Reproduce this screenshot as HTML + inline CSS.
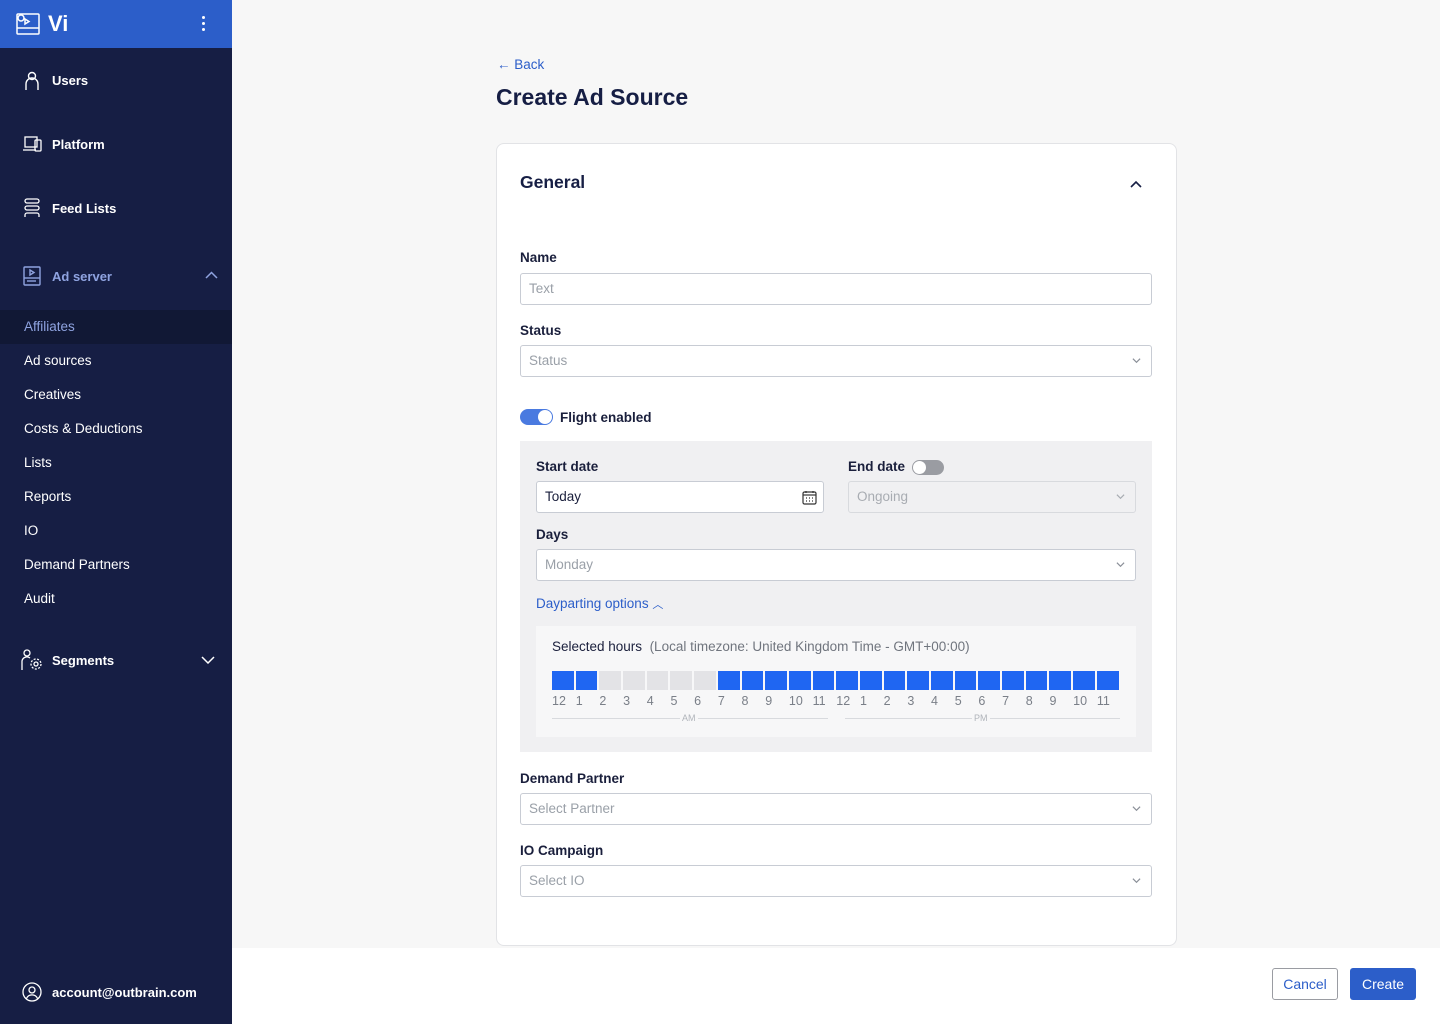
<!DOCTYPE html>
<html><head><meta charset="utf-8"><style>
*{box-sizing:border-box;margin:0;padding:0}
body{width:1440px;height:1024px;position:relative;background:#f7f7f7;font-family:"Liberation Sans",sans-serif;overflow:hidden;color:#1a1f3c}
.a{position:absolute}
#sb{left:0;top:0;width:232px;height:1024px;background:#161e44}
#hd{left:0;top:0;width:232px;height:48px;background:#2c5ec9}
.nv{color:#fff;font-size:13px;font-weight:bold;left:52px}
.sub{color:#fff;font-size:13.5px;left:24px}
.lbl{font-size:13.5px;color:#1a1f3c;font-weight:bold}
.inp{background:#fff;border:1px solid #c8ccd4;border-radius:3px;height:32px;font-size:13.5px;color:#9aa0a8;padding:7px 8px}
.chev{position:absolute;right:10px;top:10px;width:9px;height:9px}
.hrs{display:flex}
.hrs div{width:21.7px;margin-right:2px;height:19px;background:#1f66f2}
.hrs div.g{background:#e3e3e6}
.lb{display:flex;font-size:12.5px;color:#7a7f88}
.lb span{width:23.7px}
</style></head><body>
<div id="sb" class="a"></div>
<div id="hd" class="a"></div>
<svg class="a" style="left:16px;top:13px" width="24" height="22" viewBox="0 0 24 22" fill="none" stroke="#fff" stroke-width="1.5"><rect x="1" y="1" width="22" height="20" rx="1"/><line x1="1" y1="15" x2="23" y2="15"/><path d="M9 6 L13 8.5 L9 11Z"/><circle cx="5" cy="5" r="3"/></svg>
<div class="a" style="left:48px;top:11px;color:#fff;font-size:22px;font-weight:bold">Vi</div>
<div class="a" style="left:202px;top:16px;width:3px;height:3px;background:#fff;border-radius:50%;box-shadow:0 6px 0 #fff,0 12px 0 #fff"></div>
<svg class="a" style="left:24px;top:71px" width="16" height="20" viewBox="0 0 16 20" fill="none" stroke="#fff" stroke-width="1.4"><circle cx="8" cy="5" r="3.5"/><path d="M2 19v-6a6 6 0 0 1 12 0v6"/></svg>
<div class="a nv" style="top:73px">Users</div>
<svg class="a" style="left:22px;top:136px" width="20" height="16" viewBox="0 0 20 16" fill="none" stroke="#fff" stroke-width="1.3"><rect x="3" y="1" width="12" height="10"/><path d="M1 14h13"/><rect x="13" y="4" width="6" height="11" rx="1"/></svg>
<div class="a nv" style="top:137px">Platform</div>
<svg class="a" style="left:24px;top:198px" width="16" height="20" viewBox="0 0 16 20" fill="none" stroke="#fff" stroke-width="1.3"><rect x="1" y="1" width="14" height="4" rx="2"/><rect x="1" y="8" width="14" height="4" rx="2"/><path d="M1 19v-2a2 2 0 0 1 2-2h10a2 2 0 0 1 2 2v2"/></svg>
<div class="a nv" style="top:201px">Feed Lists</div>
<svg class="a" style="left:23px;top:266px" width="18" height="20" viewBox="0 0 18 20" fill="none" stroke="#8fa3e0" stroke-width="1.4"><rect x="1" y="1" width="16" height="18" rx="1"/><line x1="1" y1="12" x2="17" y2="12"/><path d="M7 4l4 2.5-4 2.5z"/><line x1="4" y1="15" x2="13" y2="15"/></svg>
<div class="a nv" style="top:269px;color:#8fa3e0">Ad server</div>
<svg class="a" style="left:205px;top:271px" width="13" height="8" viewBox="0 0 13 8" fill="none" stroke="#8fa3e0" stroke-width="1.5"><path d="M1 7l5.5-5.5L12 7"/></svg>
<div class="a" style="left:0;top:310px;width:232px;height:34px;background:#111835"></div>
<div class="a sub" style="top:319px;color:#8fa3e0">Affiliates</div>
<div class="a sub" style="top:353px">Ad sources</div>
<div class="a sub" style="top:387px">Creatives</div>
<div class="a sub" style="top:421px">Costs &amp; Deductions</div>
<div class="a sub" style="top:455px">Lists</div>
<div class="a sub" style="top:489px">Reports</div>
<div class="a sub" style="top:523px">IO</div>
<div class="a sub" style="top:557px">Demand Partners</div>
<div class="a sub" style="top:591px">Audit</div>
<svg class="a" style="left:21px;top:649px" width="22" height="22" viewBox="0 0 22 22" fill="none" stroke="#fff" stroke-width="1.3"><circle cx="6" cy="4" r="3"/><path d="M1 21V12a5 5 0 0 1 8-3"/><circle cx="15" cy="15" r="2"/><circle cx="15" cy="15" r="5" stroke-dasharray="2 1.5"/></svg>
<div class="a nv" style="top:653px">Segments</div>
<svg class="a" style="left:201px;top:656px" width="14" height="8" viewBox="0 0 14 8" fill="none" stroke="#fff" stroke-width="1.5"><path d="M1 1l6 6 6-6"/></svg>
<svg class="a" style="left:22px;top:982px" width="20" height="20" viewBox="0 0 20 20" fill="none" stroke="#fff" stroke-width="1.3"><circle cx="10" cy="10" r="9"/><circle cx="10" cy="8" r="3"/><path d="M4.5 16.5a6 6 0 0 1 11 0"/></svg>
<div class="a nv" style="top:985px">account@outbrain.com</div>

<div class="a" style="left:497px;top:57px;color:#2c5ec9;font-size:13.5px">← Back</div>
<div class="a" style="left:496px;top:84px;font-size:23px;font-weight:bold;color:#161e44">Create Ad Source</div>
<div class="a" style="left:496px;top:143px;width:681px;height:803px;background:#fff;border:1px solid #e2e3e6;border-radius:8px"></div>
<div class="a" style="left:520px;top:172px;font-size:17.5px;font-weight:bold;color:#161e44">General</div>
<svg class="a" style="left:1130px;top:180px" width="12" height="8" viewBox="0 0 12 8" fill="none" stroke="#161e44" stroke-width="1.6"><path d="M1 7l5-5 5 5"/></svg>

<div class="a lbl" style="left:520px;top:250px">Name</div>
<div class="a inp" style="left:520px;top:273px;width:632px">Text</div>
<div class="a lbl" style="left:520px;top:323px">Status</div>
<div class="a inp" style="left:520px;top:345px;width:632px">Status<svg class="chev" viewBox="0 0 10 6" fill="none" stroke="#8a8f98" stroke-width="1.3"><path d="M1 1l4 4 4-4"/></svg></div>
<div class="a" style="left:520px;top:409px;width:33px;height:16px;border-radius:8px;background:#4a7ae0"></div>
<div class="a" style="left:538px;top:410px;width:14px;height:14px;border-radius:50%;background:#fff"></div>
<div class="a lbl" style="left:560px;top:410px">Flight enabled</div>

<div class="a" style="left:520px;top:441px;width:632px;height:311px;background:#f0f0f2"></div>
<div class="a lbl" style="left:536px;top:459px">Start date</div>
<div class="a inp" style="left:536px;top:481px;width:288px;color:#1a1f3c">Today
<svg style="position:absolute;right:6px;top:8px" width="15" height="15" viewBox="0 0 15 15" fill="none" stroke="#333" stroke-width="1.2"><rect x="1" y="2" width="13" height="12" rx="1.5"/><line x1="1" y1="5" x2="14" y2="5"/><path d="M4 1v2M11 1v2M4 8h1M7 8h1M10 8h1M4 11h1M7 11h1M10 11h1"/></svg></div>
<div class="a lbl" style="left:848px;top:459px">End date</div>
<div class="a" style="left:912px;top:460px;width:32px;height:15px;border-radius:8px;background:#9a9ca2"></div>
<div class="a" style="left:913px;top:461px;width:13px;height:13px;border-radius:50%;background:#fff"></div>
<div class="a inp" style="left:848px;top:481px;width:288px;background:#f0f0f2;border-color:#d8dade;color:#a8acb2">Ongoing<svg class="chev" viewBox="0 0 10 6" fill="none" stroke="#a8acb2" stroke-width="1.3"><path d="M1 1l4 4 4-4"/></svg></div>
<div class="a lbl" style="left:536px;top:527px">Days</div>
<div class="a inp" style="left:536px;top:549px;width:600px">Monday<svg class="chev" viewBox="0 0 10 6" fill="none" stroke="#8a8f98" stroke-width="1.3"><path d="M1 1l4 4 4-4"/></svg></div>
<div class="a" style="left:536px;top:596px;font-size:13.5px;color:#2c5ec9">Dayparting options <span style="font-size:11px">︿</span></div>

<div class="a" style="left:536px;top:626px;width:600px;height:111px;background:#f7f7f8"></div>
<div class="a" style="left:552px;top:639px;font-size:13.5px;color:#1a1f3c">Selected hours <span style="color:#70757e">&nbsp;(Local timezone: United Kingdom Time - GMT+00:00)</span></div>
<div class="a hrs" style="left:552px;top:671px"><div></div><div></div><div class="g"></div><div class="g"></div><div class="g"></div><div class="g"></div><div class="g"></div><div></div><div></div><div></div><div></div><div></div><div></div><div></div><div></div><div></div><div></div><div></div><div></div><div></div><div></div><div></div><div></div><div></div></div>
<div class="a lb" style="left:552px;top:694px"><span>12</span><span>1</span><span>2</span><span>3</span><span>4</span><span>5</span><span>6</span><span>7</span><span>8</span><span>9</span><span>10</span><span>11</span><span>12</span><span>1</span><span>2</span><span>3</span><span>4</span><span>5</span><span>6</span><span>7</span><span>8</span><span>9</span><span>10</span><span>11</span></div>
<div class="a" style="left:552px;top:718px;width:276px;height:1px;background:#d8dade"></div>
<div class="a" style="left:845px;top:718px;width:275px;height:1px;background:#d8dade"></div>
<div class="a" style="left:680px;top:713px;font-size:9px;color:#b0b4ba;background:#f7f7f8;padding:0 2px">AM</div>
<div class="a" style="left:972px;top:713px;font-size:9px;color:#b0b4ba;background:#f7f7f8;padding:0 2px">PM</div>

<div class="a lbl" style="left:520px;top:771px">Demand Partner</div>
<div class="a inp" style="left:520px;top:793px;width:632px">Select Partner<svg class="chev" viewBox="0 0 10 6" fill="none" stroke="#8a8f98" stroke-width="1.3"><path d="M1 1l4 4 4-4"/></svg></div>
<div class="a lbl" style="left:520px;top:843px">IO Campaign</div>
<div class="a inp" style="left:520px;top:865px;width:632px">Select IO<svg class="chev" viewBox="0 0 10 6" fill="none" stroke="#8a8f98" stroke-width="1.3"><path d="M1 1l4 4 4-4"/></svg></div>

<div class="a" style="left:232px;top:948px;width:1208px;height:76px;background:#fff"></div>
<div class="a" style="left:1272px;top:968px;width:66px;height:32px;border:1px solid #9a9ca2;border-radius:3px;color:#2c5ec9;font-size:14px;text-align:center;line-height:30px">Cancel</div>
<div class="a" style="left:1350px;top:968px;width:66px;height:32px;background:#2c5ec9;border-radius:3px;color:#fff;font-size:14px;text-align:center;line-height:32px">Create</div>
</body></html>
